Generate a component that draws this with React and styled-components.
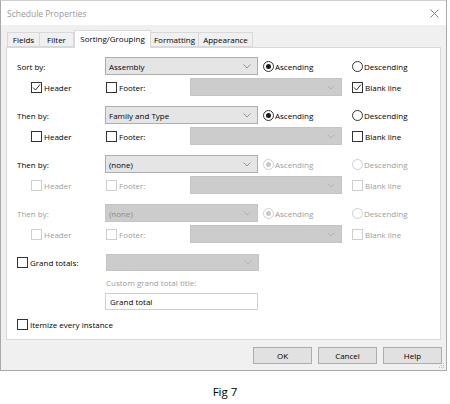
import React from 'react';
import styled, { createGlobalStyle } from 'styled-components';

const GlobalStyle = createGlobalStyle`
  html, body {
    margin: 0;
    padding: 0;
    background: #fff;
  }
  body {
    font-family: "Open Sans", "Noto Sans", sans-serif;
    font-size: 8px;
    color: #000;
  }
`;

const Page = styled.div`
  width: 450px;
  height: 404px;
`;

const Window = styled.div`
  position: relative;
  width: 447px;
  height: 371px;
  box-sizing: border-box;
  border: 1px solid #a9a9a9;
  border-top-color: #cfcfcf;
  background: #f0f0f0;
  display: flex;
  flex-direction: column;
`;

const TitleBar = styled.div`
  height: 24px;
  flex: none;
  background: #fff;
  display: flex;
  align-items: center;
  justify-content: space-between;
  padding: 0 7px 0 6px;
  color: #9a9a9a;
  font-size: 8.5px;
`;

const Body = styled.div`
  flex: 1;
  padding: 5px 5px 0 5px;
  display: flex;
  flex-direction: column;
`;

const TabRow = styled.div`
  display: flex;
  align-items: flex-end;
  height: 17px;
  padding-left: 1px;
`;

const Tab = styled.div`
  box-sizing: border-box;
  width: ${(p) => p.$w}px;
  height: ${(p) => (p.$active ? 18 : 15)}px;
  margin-bottom: ${(p) => (p.$active ? -1 : 0)}px;
  border: 1px solid #d9d9d9;
  border-bottom: ${(p) => (p.$active ? 'none' : '1px solid #d9d9d9')};
  border-left: ${(p) => (p.$first || p.$active ? '1px solid #d9d9d9' : 'none')};
  background: ${(p) => (p.$active ? '#fff' : '#f0f0f0')};
  display: flex;
  align-items: center;
  justify-content: center;
  padding-bottom: ${(p) => (p.$active ? 2 : 0)}px;
  position: relative;
  z-index: ${(p) => (p.$active ? 1 : 0)};
  white-space: nowrap;
`;

const Panel = styled.div`
  box-sizing: border-box;
  width: 435px;
  height: 293px;
  background: #fff;
  border: 1px solid #d9d9d9;
  padding: 9px 0 0 10px;
  display: flex;
  flex-direction: column;
`;

const Group = styled.div`
  display: flex;
  flex-direction: column;
  gap: 3px;
  margin-top: ${(p) => p.$mt || 0}px;
`;

const Row = styled.div`
  display: flex;
  align-items: center;
  height: ${(p) => p.$h || 18}px;
  padding-left: ${(p) => p.$indent || 0}px;
  margin-top: ${(p) => p.$mt || 0}px;
`;

const Label = styled.div`
  width: ${(p) => p.$w || 88}px;
  color: ${(p) => (p.$disabled ? '#9d9d9d' : '#000')};
  white-space: nowrap;
`;

const SelectBox = styled.div`
  box-sizing: border-box;
  width: ${(p) => p.$w}px;
  height: ${(p) => p.$h || 18}px;
  background: ${(p) => (p.$disabled ? '#cccccc' : '#e5e5e5')};
  border: 1px solid ${(p) => (p.$disabled ? '#c4c4c4' : '#adadad')};
  color: ${(p) => (p.$disabled ? '#8a8a8a' : '#000')};
  display: flex;
  align-items: center;
  justify-content: space-between;
  padding: 0 6px 0 3px;
  white-space: nowrap;
`;

const Chevron = ({ disabled }) => (
  <svg width="8" height="5" viewBox="0 0 8 5">
    <polyline
      points="0.5,0.5 4,4 7.5,0.5"
      fill="none"
      stroke={disabled ? '#b0b0b0' : '#8a8a8a'}
      strokeWidth="0.9"
    />
  </svg>
);

const Select = ({ value, w, h, disabled }) => (
  <SelectBox $w={w} $h={h} $disabled={disabled}>
    <span>{value}</span>
    <Chevron disabled={disabled} />
  </SelectBox>
);

const Item = styled.div`
  display: flex;
  align-items: center;
  gap: ${(p) => p.$gap || 2}px;
  width: ${(p) => (p.$w ? `${p.$w}px` : 'auto')};
  margin-left: ${(p) => p.$ml || 0}px;
  color: ${(p) => (p.$disabled ? '#9d9d9d' : '#000')};
  white-space: nowrap;
`;

const Box = styled.div`
  box-sizing: border-box;
  width: 11px;
  height: 11px;
  flex: none;
  border: 1px solid ${(p) => (p.$disabled ? '#cfcfcf' : '#333')};
  background: #fff;
  display: flex;
  align-items: center;
  justify-content: center;
`;

const Circle = styled(Box)`
  border-radius: 50%;
  border-color: ${(p) => (p.$disabled ? '#cfcfcf' : '#333')};
`;

const Dot = styled.div`
  width: 5px;
  height: 5px;
  border-radius: 50%;
  background: ${(p) => (p.$disabled ? '#c8c8c8' : '#1a1a1a')};
`;

const Check = ({ label, checked, disabled, w, ml }) => (
  <Item $w={w} $ml={ml} $disabled={disabled}>
    <Box $disabled={disabled}>
      {checked && (
        <svg width="9" height="9" viewBox="0 0 9 9">
          <polyline points="1,4.5 3.5,7 8,1.5" fill="none" stroke="#333" strokeWidth="1" />
        </svg>
      )}
    </Box>
    {label}
  </Item>
);

const Radio = ({ label, checked, disabled, w, ml }) => (
  <Item $w={w} $ml={ml} $gap={1} $disabled={disabled}>
    <Circle $disabled={disabled}>{checked && <Dot $disabled={disabled} />}</Circle>
    {label}
  </Item>
);

const Hint = styled.div`
  margin: 6px 0 0 89px;
  height: 12px;
  line-height: 12px;
  color: #9d9d9d;
`;

const TextBox = styled.div`
  box-sizing: border-box;
  width: 153px;
  height: 17px;
  margin: 4px 0 0 88px;
  border: 1px solid #cfcfcf;
  background: #fff;
  display: flex;
  align-items: center;
  padding-left: 4px;
`;

const Footer = styled.div`
  display: flex;
  justify-content: flex-end;
  gap: 6px;
  margin: 7px -1px 0 0;
`;

const Button = styled.div`
  box-sizing: border-box;
  width: 59px;
  height: 17px;
  background: #e1e1e1;
  border: 1px solid #adadad;
  display: flex;
  align-items: center;
  justify-content: center;
`;

const Grip = styled.svg`
  position: absolute;
  right: 1px;
  bottom: 1px;
`;

const Caption = styled.div`
  margin-top: 13px;
  height: 16px;
  line-height: 16px;
  text-align: center;
  font-size: 11.5px;
  color: #000;
`;

const tabs = [
  { label: 'Fields', w: 33 },
  { label: 'Filter', w: 34 },
  { label: 'Sorting/Grouping', w: 77, active: true },
  { label: 'Formatting', w: 48 },
  { label: 'Appearance', w: 54 },
];

const groups = [
  { label: 'Sort by:', value: 'Assembly', header: true, blank: true },
  { label: 'Then by:', value: 'Family and Type' },
  { label: 'Then by:', value: '(none)', subDisabled: true },
  { label: 'Then by:', value: '(none)', disabled: true, subDisabled: true },
];

export default function App() {
  return (
    <Page>
      <GlobalStyle />
      <Window>
        <TitleBar>
          <span>Schedule Properties</span>
          <svg width="9" height="9" viewBox="0 0 9 9">
            <path d="M0.5 0.5 L8.5 8.5 M8.5 0.5 L0.5 8.5" stroke="#777" strokeWidth="0.9" />
          </svg>
        </TitleBar>
        <Body>
          <TabRow>
            {tabs.map((t, i) => (
              <Tab key={t.label} $w={t.w} $active={t.active} $first={i === 0}>
                {t.label}
              </Tab>
            ))}
          </TabRow>
          <Panel>
            {groups.map((g, i) => {
              const rd = g.disabled || g.subDisabled;
              return (
                <Group key={i} $mt={i === 0 ? 0 : 10}>
                  <Row>
                    <Label $disabled={g.disabled}>{g.label}</Label>
                    <Select value={g.value} w={153} disabled={g.disabled} />
                    <Radio label="Ascending" checked w={89} ml={5} disabled={rd} />
                    <Radio label="Descending" disabled={rd} />
                  </Row>
                  <Row $indent={14}>
                    <Check label="Header" checked={g.header} w={75} disabled={g.subDisabled} />
                    <Check label="Footer:" w={84} disabled={g.subDisabled} />
                    <Select w={152} disabled />
                    <Check label="Blank line" checked={g.blank} ml={10} disabled={g.subDisabled} />
                  </Row>
                </Group>
              );
            })}
            <Row $h={17} $mt={11}>
              <Check label="Grand totals:" w={89} />
              <Select w={153} h={17} disabled />
            </Row>
            <Hint>Custom grand total title:</Hint>
            <TextBox>Grand total</TextBox>
            <Row $mt={5}>
              <Check label="Itemize every instance" />
            </Row>
          </Panel>
          <Footer>
            <Button>OK</Button>
            <Button>Cancel</Button>
            <Button>Help</Button>
          </Footer>
        </Body>
        <Grip width="7" height="7" viewBox="0 0 7 7">
          <g fill="#bcbcbc">
            <rect x="5" y="1" width="1" height="1" />
            <rect x="3" y="3" width="1" height="1" />
            <rect x="5" y="3" width="1" height="1" />
            <rect x="1" y="5" width="1" height="1" />
            <rect x="3" y="5" width="1" height="1" />
            <rect x="5" y="5" width="1" height="1" />
          </g>
        </Grip>
      </Window>
      <Caption>Fig 7</Caption>
    </Page>
  );
}
